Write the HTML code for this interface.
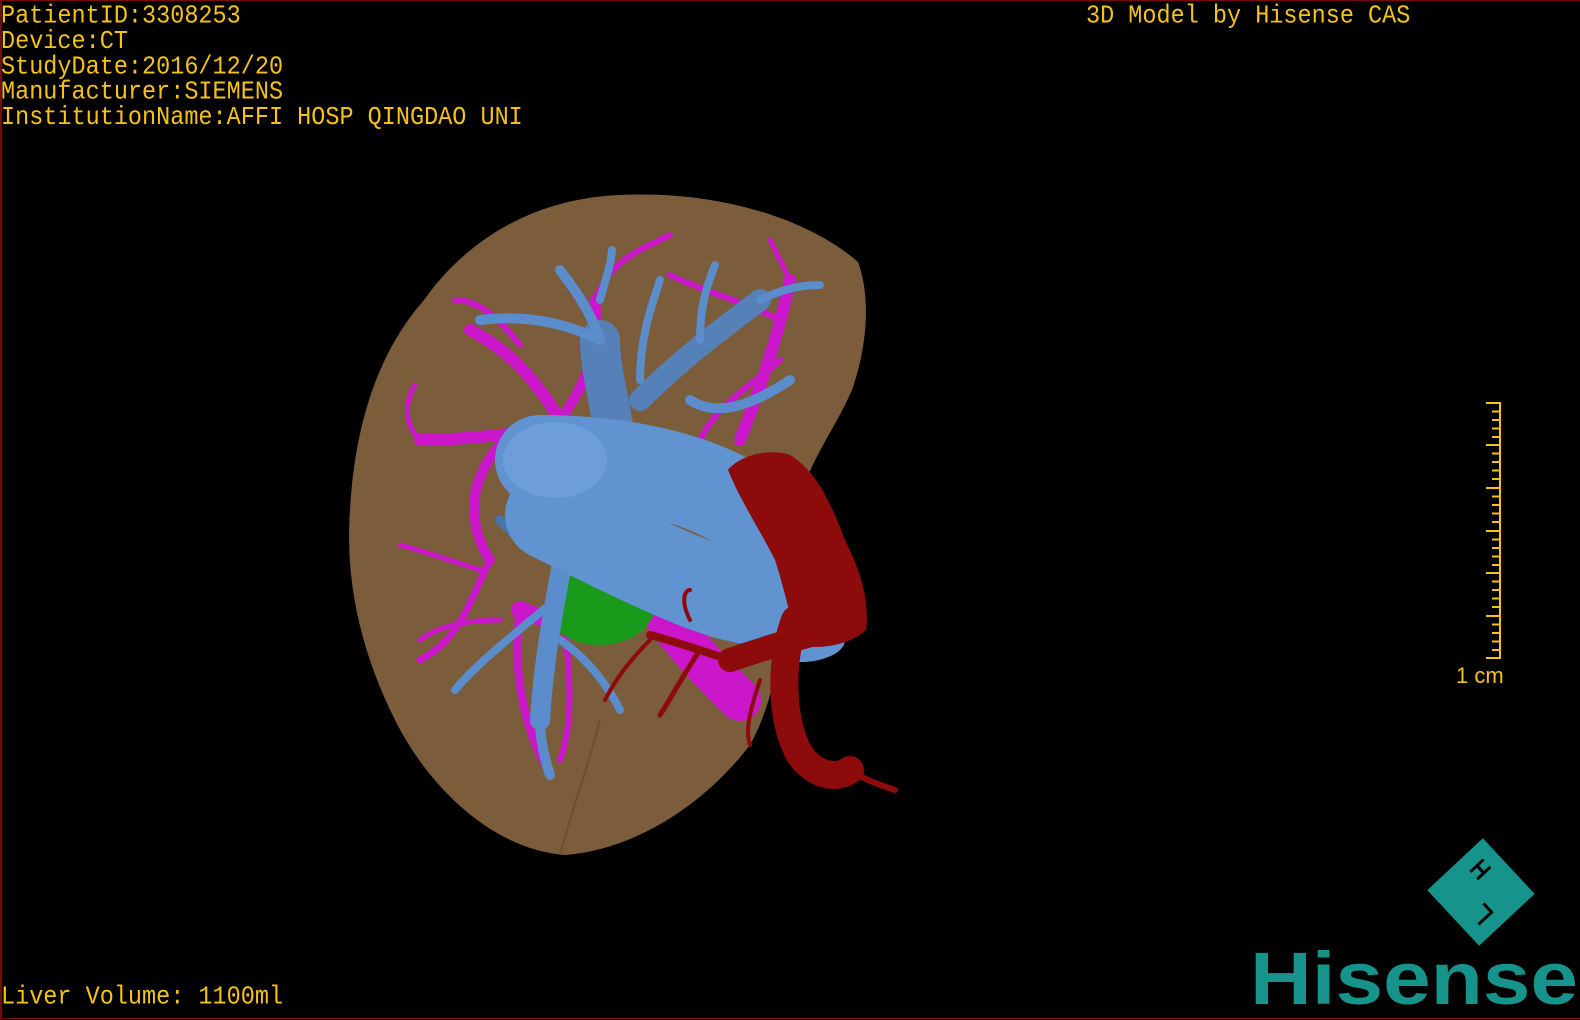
<!DOCTYPE html>
<html><head><meta charset="utf-8"><style>
html,body{margin:0;padding:0;background:#000;width:1580px;height:1020px;overflow:hidden;position:relative}
.t{position:absolute;font-family:"Liberation Mono",monospace;font-size:23.5px;color:#f5c21a;white-space:pre;line-height:23px;transform:scaleY(1.1);transform-origin:0 0}
.border{position:absolute;left:0;top:0;width:1578px;height:1017px;border:1px solid #7a0a0a;border-left:2px solid #7a0a0a;box-sizing:content-box}
</style></head><body>
<div class="border"></div>
<div class="t" style="left:1px;top:4px">PatientID:3308253
Device:CT
StudyDate:2016/12/20
Manufacturer:SIEMENS
InstitutionName:AFFI HOSP QINGDAO UNI</div>
<div class="t" style="left:1086px;top:4px">3D Model by Hisense CAS</div>
<div class="t" style="left:1px;top:985px">Liver Volume: 1100ml</div>

<svg style="position:absolute;left:0;top:0" width="1580" height="1020" viewBox="0 0 1580 1020">
<!-- liver -->
<path d="M424,300 C470,235 540,198 620,195 C720,190 810,220 858,262 C872,300 866,350 852,390 C830,440 800,470 790,540 C785,640 775,700 750,745 C700,810 630,850 565,855 C495,850 430,790 395,720 C360,650 345,580 350,510 C355,420 380,350 424,300 Z" fill="#7b5c3b"/>
<path d="M560,855 C575,800 590,760 600,720" fill="none" stroke="#6c4f32" stroke-width="2"/>
<g fill="none" stroke-linecap="round">
<!-- magenta branches -->
<g stroke="#cc16cc">
<path d="M560,420 C530,370 500,345 470,330" stroke-width="12"/>
<path d="M520,345 C500,320 480,300 455,300" stroke-width="6"/>
<path d="M560,420 C590,380 600,340 595,300" stroke-width="10"/>
<path d="M595,300 C610,260 640,250 670,235" stroke-width="6"/>
<path d="M540,430 C500,435 460,440 420,440" stroke-width="12"/>
<path d="M420,440 C410,430 400,410 415,385" stroke-width="5"/>
<path d="M500,445 C470,480 465,520 490,560" stroke-width="10"/>
<path d="M490,560 C470,600 460,640 420,660" stroke-width="7"/>
<path d="M480,570 C450,560 420,550 400,545" stroke-width="5"/>
<path d="M500,620 C470,620 440,625 420,640" stroke-width="5"/>
<path d="M520,610 C510,680 530,740 548,770" stroke-width="8"/>
<path d="M560,600 C570,660 575,720 560,760" stroke-width="6"/>
<path d="M740,440 C760,390 780,330 790,280" stroke-width="12"/>
<path d="M780,320 C740,300 700,290 670,275" stroke-width="6"/>
<path d="M790,280 C780,260 775,250 770,240" stroke-width="5"/>
<path d="M700,440 C720,400 760,380 780,360" stroke-width="6"/>
<path d="M640,570 C660,620 700,660 740,700" stroke-width="42"/>
<path d="M580,560 C600,590 640,600 660,610" stroke-width="24"/>
<path d="M520,610 C540,620 570,620 600,630" stroke-width="18"/>
</g>
<ellipse cx="600" cy="605" rx="55" ry="40" fill="#1a9a1a" stroke="none"/>
<g stroke="#5b8ccb">
<path d="M615,440 C610,400 600,370 600,340" stroke-width="40" stroke="#5580b8"/>
<path d="M600,340 C590,310 575,290 560,270" stroke-width="10"/>
<path d="M600,340 C560,320 520,315 480,320" stroke-width="10"/>
<path d="M640,400 C680,360 720,330 760,300" stroke-width="22" stroke="#5580b8"/>
<path d="M760,300 C780,290 800,285 820,285" stroke-width="8"/>
<path d="M700,340 C700,310 705,290 715,265" stroke-width="8"/>
<path d="M690,400 C720,420 760,400 790,380" stroke-width="10"/>
<path d="M640,380 C640,340 650,310 660,280" stroke-width="8"/>
<path d="M600,300 C605,280 610,270 612,250" stroke-width="8"/>
<path d="M570,520 C560,580 545,640 540,720" stroke-width="20"/>
<path d="M540,720 C540,740 545,760 550,775" stroke-width="10"/>
<path d="M555,600 C520,630 480,660 455,690" stroke-width="8"/>
<path d="M560,560 C540,560 520,540 500,520" stroke-width="10" stroke="#4a75a8"/>
<path d="M560,640 C590,660 610,690 620,710" stroke-width="8"/>
</g>
<path d="M540,460 C600,460 700,470 760,520 C790,550 790,580 760,600 C720,600 640,560 550,515" stroke="#6193d0" stroke-width="90" stroke-linecap="round"/>
<ellipse cx="800" cy="640" rx="45" ry="22" fill="#6193d0" stroke="none"/>
<ellipse cx="555" cy="460" rx="52" ry="38" fill="#6d9edb" stroke="none"/>
<!-- red -->
<path d="M728,470 C740,455 770,448 790,455 C815,470 830,500 845,540 C860,570 870,600 866,630 C850,645 820,650 800,645 C790,620 785,590 775,560 C760,530 740,500 728,470 Z" fill="#8d0b0b" stroke="none"/>
<g stroke="#8d0b0b">
<path d="M795,620 C780,660 780,720 800,755 C815,775 835,780 850,770" stroke-width="28"/>
<path d="M850,770 C865,780 880,785 895,790" stroke-width="6"/>
<path d="M830,630 C790,640 760,650 730,660" stroke-width="24"/>
<path d="M730,660 C700,650 670,640 650,635" stroke-width="8"/>
<path d="M700,650 C680,680 670,700 660,715" stroke-width="5"/>
<path d="M690,620 C680,600 685,590 690,590" stroke-width="4"/>
<path d="M650,640 C630,660 615,680 605,700" stroke-width="4"/>
<path d="M760,680 C750,710 745,730 750,745" stroke-width="4"/>
</g>
</g>
<g stroke="#f5c21a" stroke-width="2">
<line x1="1500" y1="403" x2="1500" y2="658"/>
<line x1="1486" y1="403" x2="1501" y2="403"/>
<line x1="1486" y1="658" x2="1501" y2="658"/>
<path d="M1492,411.5H1500M1492,420H1500M1492,428.5H1500M1492,437H1500M1486,445H1500M1492,453.5H1500M1492,462H1500M1492,470.5H1500M1492,479H1500M1486,488H1500M1492,496.5H1500M1492,505H1500M1492,513.5H1500M1492,522H1500M1486,531H1500M1492,539.5H1500M1492,548H1500M1492,556.5H1500M1492,565H1500M1486,573H1500M1492,581.5H1500M1492,590H1500M1492,598.5H1500M1492,607H1500M1486,616H1500M1492,624.5H1500M1492,633H1500M1492,641.5H1500M1492,650H1500"/>
</g>
<text x="1456" y="683" font-family="Liberation Sans,sans-serif" font-size="22" fill="#f5c21a">1 cm</text>
<g transform="translate(1481,892) rotate(47)">
<rect x="-38" y="-38" width="76" height="76" fill="#16948c"/>
<g stroke="#000" stroke-width="3" fill="none">
<path d="M-22,-24V-6M-12,-24V-6M-22,-15H-12"/>
<path d="M10,6H22V24"/>
</g>
</g>
<text x="1250" y="1004" font-family="Liberation Sans,sans-serif" font-weight="bold" font-size="74" fill="#16948c" textLength="328" lengthAdjust="spacingAndGlyphs">Hisense</text>
</svg>
</body></html>
